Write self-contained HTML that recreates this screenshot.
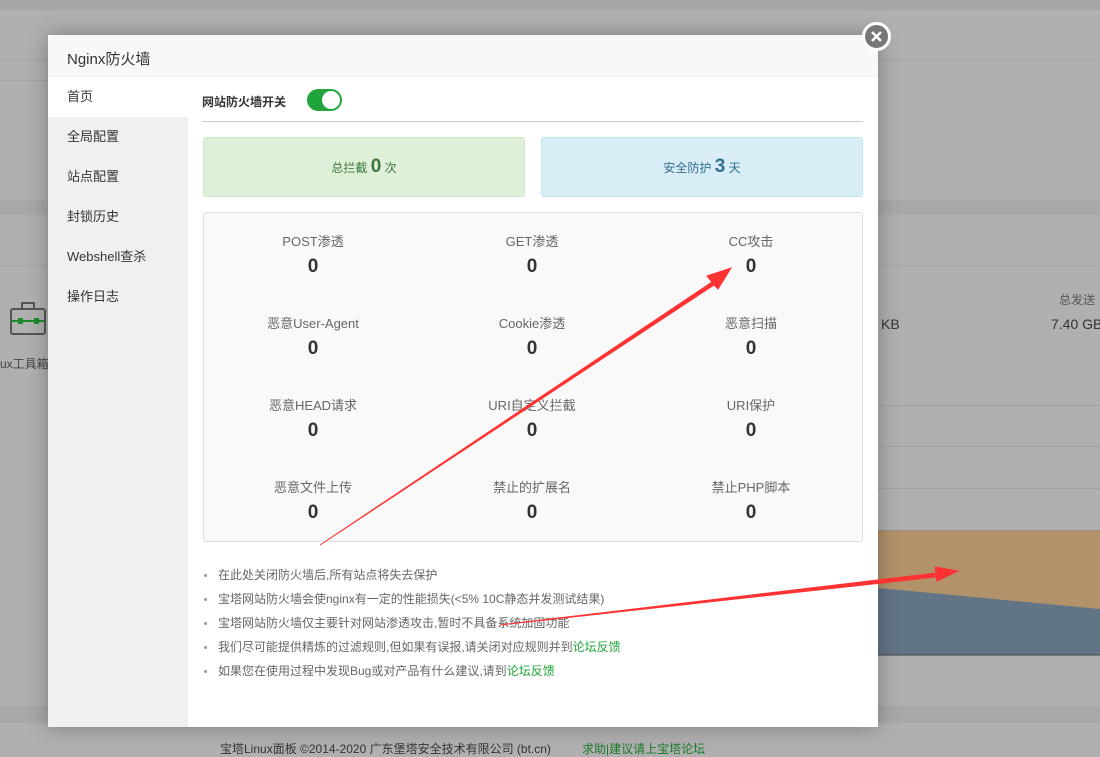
<!DOCTYPE html>
<html><head><meta charset="utf-8"><style>
*{margin:0;padding:0;box-sizing:border-box}
body{width:1100px;height:757px;overflow:hidden;background:#b0b0b0;font-family:"Liberation Sans","Noto Sans CJK SC",sans-serif;position:relative}
.a{position:absolute;white-space:nowrap}
.m{left:48px;top:35px;width:830px;height:692px;background:#fff;box-shadow:0 0 20px rgba(0,0,0,.3)}
.hd{left:0;top:0;width:830px;height:42px;background:#f8f8f8;border-bottom:1px solid #eee;font-size:15px;color:#333;padding:13px 0 0 19px}
.sb{left:0;top:42px;width:140px;height:650px;background:#f0f0f0}
.sb div{height:40px;line-height:40px;padding-left:19px;font-size:13px;color:#333}
.sb .on{background:#fff}
.st{font-size:13px;color:#666;text-align:center;width:220px}
.n{font-size:19px;font-weight:bold;color:#333;text-align:center;width:220px}
ul{list-style:none}
li{font-size:12px;color:#666;height:24px;line-height:24px;position:relative;padding-left:16px}
li:before{content:"";position:absolute;left:2px;top:11px;width:3px;height:3px;background:#999;border-radius:50%}
li span{color:#20a53a}
</style></head><body>
<div class="a" style="left:0;top:0;width:1100px;height:10px;background:#a6a6a6"></div>
<div class="a" style="left:0;top:59px;width:1100px;height:1px;background:#a4a4a4"></div>
<div class="a" style="left:0;top:80px;width:48px;height:1px;background:#a4a4a4"></div>
<div class="a" style="left:0;top:200px;width:1100px;height:15px;background:#a8a8a8"></div>
<div class="a" style="left:0;top:265px;width:1100px;height:1px;background:#a6a6a6"></div>
<div class="a" style="left:878px;top:405px;width:222px;height:1px;background:#a2a2a2"></div>
<div class="a" style="left:878px;top:446px;width:222px;height:1px;background:#a2a2a2"></div>
<div class="a" style="left:878px;top:488px;width:222px;height:1px;background:#a2a2a2"></div>
<svg class="a" style="left:878px;top:530px" width="222" height="126"><rect width="222" height="125" fill="#b2926a"/><polygon points="0,58 222,79 222,125 0,125" fill="#627586"/><line x1="0" y1="0" x2="222" y2="0" stroke="#888"/><line x1="0" y1="125" x2="222" y2="125" stroke="#444"/></svg>
<div class="a" style="left:0;top:706px;width:1100px;height:17px;background:#a8a8a8"></div>
<div class="a" style="left:866px;top:291px;font-size:12px;color:#555">行</div>
<div class="a" style="left:1059px;top:291px;font-size:12px;color:#555">总发送</div>
<div class="a" style="left:881px;top:316px;font-size:14px;color:#333">KB</div>
<div class="a" style="left:1051px;top:316px;font-size:14px;color:#333">7.40 GB</div>
<svg class="a" style="left:9px;top:300px" width="38" height="36"><rect x="2" y="9" width="34" height="25" rx="2" fill="none" stroke="#555" stroke-width="2"/><rect x="13" y="3" width="12" height="6" fill="none" stroke="#555" stroke-width="2"/><line x1="2" y1="21" x2="36" y2="21" stroke="#1a8a2a" stroke-width="2"/><rect x="9" y="18" width="5" height="6" fill="#1a8a2a"/><rect x="25" y="18" width="5" height="6" fill="#1a8a2a"/></svg>
<div class="a" style="left:0;top:355px;font-size:12px;color:#444">ux工具箱</div>
<div class="a" style="left:220px;top:740px;font-size:12px;color:#333">宝塔Linux面板 ©2014-2020 广东堡塔安全技术有限公司 (bt.cn)</div>
<div class="a" style="left:582px;top:740px;font-size:12px;color:#1a7a2a">求助|建议请上宝塔论坛</div>

<div class="a m">
<div class="a hd">Nginx防火墙</div>
<div class="a sb"><div class="on">首页</div><div>全局配置</div><div>站点配置</div><div>封锁历史</div><div>Webshell查杀</div><div>操作日志</div></div>
<div class="a" style="left:154px;top:58px;font-size:12px;font-weight:bold;color:#333">网站防火墙开关</div>
<div class="a" style="left:259px;top:54px;width:35px;height:22px;border-radius:11px;background:#20a53a"><div class="a" style="right:2px;top:2px;width:18px;height:18px;border-radius:50%;background:#fff"></div></div>
<div class="a" style="left:154px;top:86px;width:661px;height:1px;background:#ccc"></div>
<div class="a" style="left:155px;top:102px;width:322px;height:60px;background:#dff0d8;border:1px solid #d0e6c6;border-radius:3px;text-align:center;line-height:58px;font-size:12px;color:#3c763d">总拦截 <b style="font-size:19px">0</b> 次</div>
<div class="a" style="left:493px;top:102px;width:322px;height:60px;background:#d9edf7;border:1px solid #bce8f1;border-radius:3px;text-align:center;line-height:58px;font-size:12px;color:#31708f">安全防护 <b style="font-size:19px">3</b> 天</div>
<div class="a" style="left:155px;top:177px;width:660px;height:330px;background:#f9f9f9;border:1px solid #ddd;border-radius:3px"></div>
<div class="a st" style="left:155px;top:196px">POST渗透</div><div class="a n" style="left:155px;top:221px">0</div>
<div class="a st" style="left:374px;top:196px">GET渗透</div><div class="a n" style="left:374px;top:221px">0</div>
<div class="a st" style="left:593px;top:196px">CC攻击</div><div class="a n" style="left:593px;top:221px">0</div>
<div class="a st" style="left:155px;top:278px">恶意User-Agent</div><div class="a n" style="left:155px;top:303px">0</div>
<div class="a st" style="left:374px;top:278px">Cookie渗透</div><div class="a n" style="left:374px;top:303px">0</div>
<div class="a st" style="left:593px;top:278px">恶意扫描</div><div class="a n" style="left:593px;top:303px">0</div>
<div class="a st" style="left:155px;top:360px">恶意HEAD请求</div><div class="a n" style="left:155px;top:385px">0</div>
<div class="a st" style="left:374px;top:360px">URI自定义拦截</div><div class="a n" style="left:374px;top:385px">0</div>
<div class="a st" style="left:593px;top:360px">URI保护</div><div class="a n" style="left:593px;top:385px">0</div>
<div class="a st" style="left:155px;top:442px">恶意文件上传</div><div class="a n" style="left:155px;top:467px">0</div>
<div class="a st" style="left:374px;top:442px">禁止的扩展名</div><div class="a n" style="left:374px;top:467px">0</div>
<div class="a st" style="left:593px;top:442px">禁止PHP脚本</div><div class="a n" style="left:593px;top:467px">0</div>
<ul class="a" style="left:154px;top:528px">
<li>在此处关闭防火墙后,所有站点将失去保护</li>
<li>宝塔网站防火墙会使nginx有一定的性能损失(&lt;5% 10C静态并发测试结果)</li>
<li>宝塔网站防火墙仅主要针对网站渗透攻击,暂时不具备系统加固功能</li>
<li>我们尽可能提供精炼的过滤规则,但如果有误报,请关闭对应规则并到<span>论坛反馈</span></li>
<li>如果您在使用过程中发现Bug或对产品有什么建议,请到<span>论坛反馈</span></li>
</ul>
</div>
<div class="a" style="left:862px;top:22px;width:29px;height:29px;border-radius:50%;background:#777;border:3px solid #fff"><svg width="23" height="23" style="display:block"><path d="M7 7L16 16M16 7L7 16" stroke="#fff" stroke-width="2.5"/></svg></div>
<svg class="a" style="left:0;top:0" width="1100" height="757">
<polygon points="320,545 712,282 707,276 731,268 718,289 714,285" fill="#f33" stroke="#f33" stroke-width="1"/>
<polygon points="500,625 936,573 935,567 958,571 937,581 936,577" fill="#f33" stroke="#f33" stroke-width="1"/>
</svg>
</body></html>
